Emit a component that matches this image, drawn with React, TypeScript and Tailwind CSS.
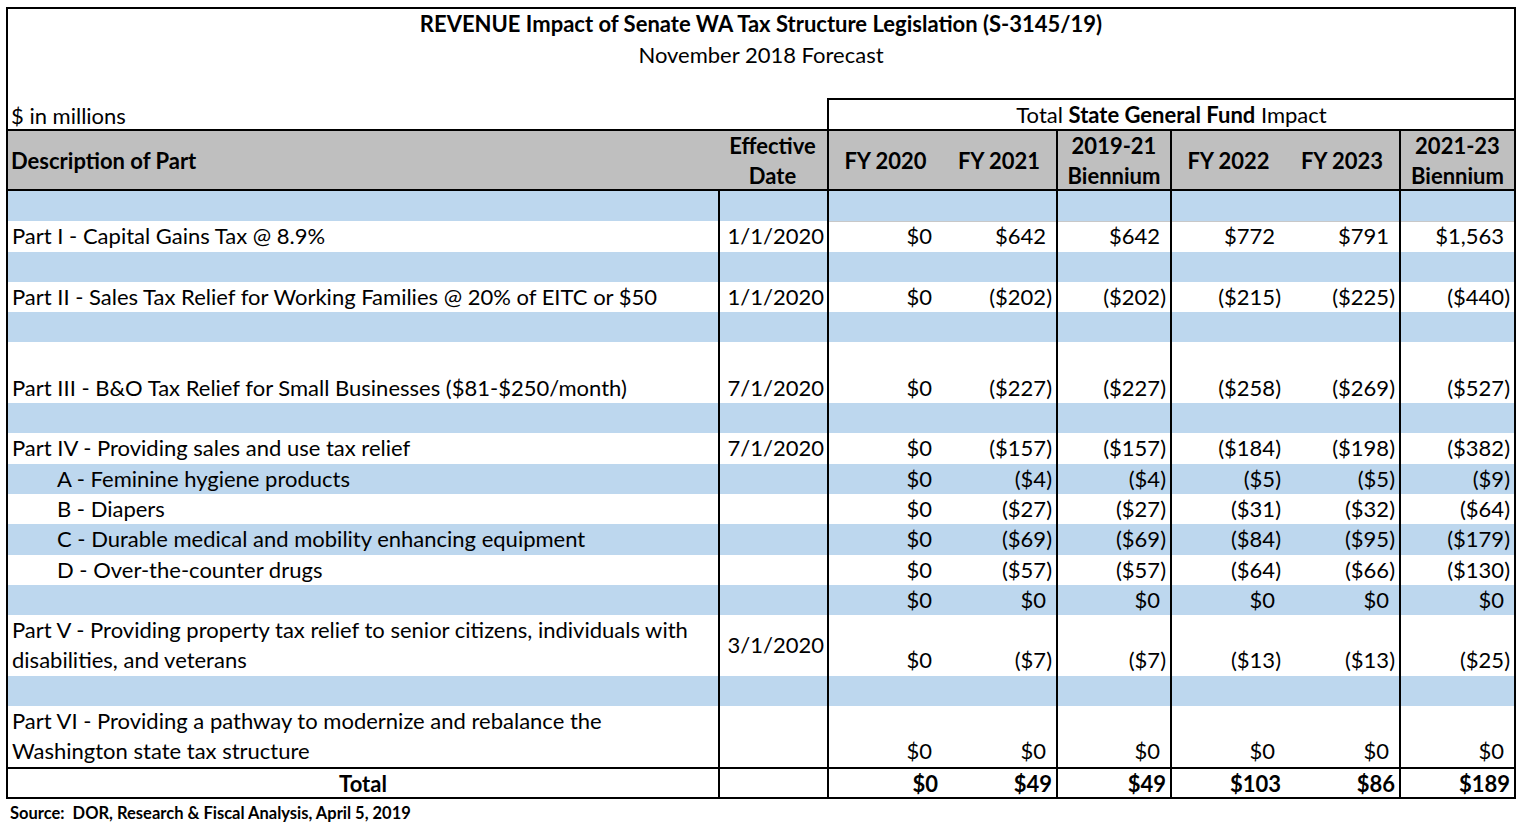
import React from "react";

type Row = {
  desc?: React.ReactNode;
  date?: string;
  vals?: number[];
  blue?: boolean;
  tall?: boolean;
  indent?: boolean;
  dateMiddle?: boolean;
  gridTop?: boolean;
};

const cols =
  "grid grid-cols-[710px_109px_115px_114px_114px_115px_114px_115px]";

// left border flags for the 8 columns
const leftBorder = [false, true, true, false, true, true, false, true];

function fmt(n: number) {
  const s = "$" + Math.abs(n).toLocaleString("en-US");
  if (n < 0) return <span>({s})</span>;
  return (
    <span>
      {s}
      <span className="invisible">)</span>
    </span>
  );
}

const rows: Row[] = [
  { blue: true },
  {
    desc: "Part I - Capital Gains Tax @ 8.9%",
    date: "1/1/2020",
    vals: [0, 642, 642, 772, 791, 1563],
    gridTop: true,
  },
  { blue: true },
  {
    desc: "Part II - Sales Tax Relief for Working Families @ 20% of EITC or $50",
    date: "1/1/2020",
    vals: [0, -202, -202, -215, -225, -440],
  },
  { blue: true },
  {
    desc: "Part III - B&O Tax Relief for Small Businesses ($81-$250/month)",
    date: "7/1/2020",
    vals: [0, -227, -227, -258, -269, -527],
    tall: true,
  },
  { blue: true },
  {
    desc: "Part IV - Providing sales and use tax relief",
    date: "7/1/2020",
    vals: [0, -157, -157, -184, -198, -382],
  },
  { desc: "A - Feminine hygiene products", vals: [0, -4, -4, -5, -5, -9], blue: true, indent: true },
  { desc: "B - Diapers", vals: [0, -27, -27, -31, -32, -64], indent: true },
  {
    desc: "C - Durable medical and mobility enhancing equipment",
    vals: [0, -69, -69, -84, -95, -179],
    blue: true,
    indent: true,
  },
  { desc: "D - Over-the-counter drugs", vals: [0, -57, -57, -64, -66, -130], indent: true },
  { vals: [0, 0, 0, 0, 0, 0], blue: true },
  {
    desc: (
      <>
        Part V - Providing property tax relief to senior citizens, individuals with
        <br />
        disabilities, and veterans
      </>
    ),
    date: "3/1/2020",
    vals: [0, -7, -7, -13, -13, -25],
    tall: true,
    dateMiddle: true,
  },
  { blue: true },
  {
    desc: (
      <>
        Part VI - Providing a pathway to modernize and rebalance the
        <br />
        Washington state tax structure
      </>
    ),
    vals: [0, 0, 0, 0, 0, 0],
    tall: true,
  },
];

function DataRow({ row }: { row: Row }) {
  const h = row.tall ? "h-[60.6px]" : "h-[30.3px]";
  const bg = row.blue ? "bg-[#bdd7ee]" : "bg-white";
  const cells: React.ReactNode[] = [
    <div
      key="d"
      className={`${h} flex ${row.tall && typeof row.desc !== "string" ? "items-center" : "items-end"} ${row.indent ? "pl-[49px]" : "pl-[4px]"} leading-[30.3px] whitespace-nowrap`}
    >
      <div>{row.desc}</div>
    </div>,
    <div
      key="t"
      className={`${h} flex ${row.dateMiddle ? "items-center" : "items-end"} justify-end pr-[3px] leading-[30.3px] border-l-2 border-black`}
    >
      {row.date}
    </div>,
  ];
  (row.vals ?? [null, null, null, null, null, null]).forEach((v, i) => {
    cells.push(
      <div
        key={"v" + i}
        className={`${h} relative flex items-end justify-end pr-[4px] leading-[30.3px] ${leftBorder[i + 2] ? "border-l-2 border-black" : ""}`}
      >
        {row.gridTop && (
          <div className="absolute left-0 right-0 top-0 h-px bg-[#c8c8c8]" />
        )}
        {v === null ? null : fmt(v)}
      </div>,
    );
  });
  return <div className={`${cols} ${bg}`}>{cells}</div>;
}

export default function App() {
  const totals = ["$0", "$49", "$49", "$103", "$86", "$189"];
  return (
    <div
      className="bg-white text-black text-[22px] w-[1524px] h-[825px] overflow-hidden"
      style={{ fontFamily: "Lato, 'Open Sans', sans-serif" }}
    >
      <div className="ml-[6px] mt-[7px] w-[1510px] border-2 border-black">
        <div className="h-[89px] text-center">
          <div className="font-bold leading-[30px]">
            REVENUE Impact of Senate WA Tax Structure Legislation (S-3145/19)
          </div>
          <div className="leading-[31px]">November 2018 Forecast</div>
        </div>
        <div className={cols}>
          <div className="col-span-2 h-[31px] pl-[3px] leading-[35px]">$ in millions</div>
          <div className="col-span-6 h-[31px] border-t-2 border-l-2 border-black text-center leading-[30px]">
            Total <span className="font-bold">State General Fund</span> Impact
          </div>
        </div>
        <div className={`${cols} bg-[#bfbfbf] border-y-2 border-black font-bold h-[62px] leading-[30px]`}>
          <div className="flex items-center pl-[3px]">Description of Part</div>
          <div className="flex items-center justify-center text-center">
            Effective
            <br />
            Date
          </div>
          <div className="flex items-center justify-center border-l-2 border-black">FY 2020</div>
          <div className="flex items-center justify-center">FY 2021</div>
          <div className="flex items-center justify-center text-center border-l-2 border-black">
            2019-21
            <br />
            Biennium
          </div>
          <div className="flex items-center justify-center border-l-2 border-black">FY 2022</div>
          <div className="flex items-center justify-center">FY 2023</div>
          <div className="flex items-center justify-center text-center border-l-2 border-black">
            2021-23
            <br />
            Biennium
          </div>
        </div>
        {rows.map((r, i) => (
          <DataRow key={i} row={r} />
        ))}
        <div className={`${cols} border-t-2 border-black font-bold h-[30px] leading-[29px]`}>
          <div className="text-center">Total</div>
          <div className="border-l-2 border-black" />
          {totals.map((t, i) => (
            <div
              key={t + i}
              className={`text-right pr-[4px] ${leftBorder[i + 2] ? "border-l-2 border-black" : ""}`}
            >
              {t}
            </div>
          ))}
        </div>
      </div>
      <div className="pl-[10px] pt-[4px] text-[16.5px] font-bold leading-[20px]">
        Source:&nbsp; DOR, Research &amp; Fiscal Analysis, April 5, 2019
      </div>
    </div>
  );
}
